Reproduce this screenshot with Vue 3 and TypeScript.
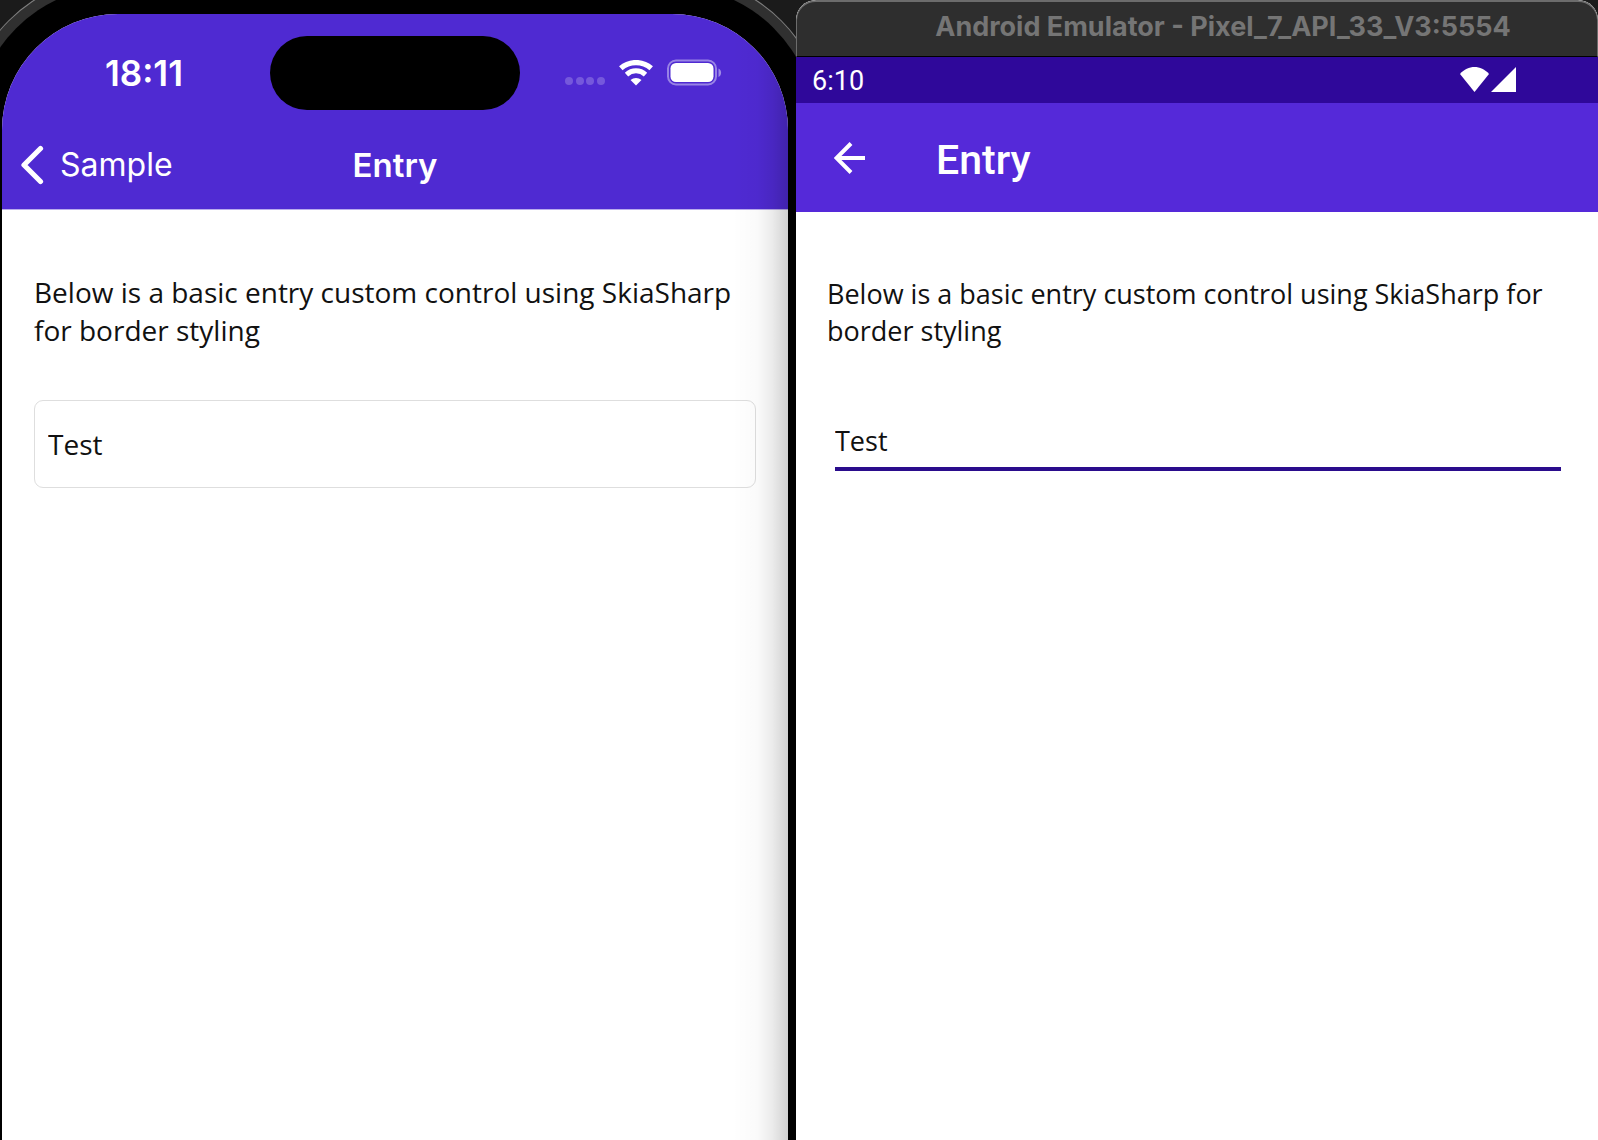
<script setup lang="ts">
import { ref } from 'vue'

const message = 'Below is a basic entry custom control using SkiaSharp for border styling'
const iosValue = ref('Test')
const androidValue = ref('Test')
</script>

<template>
  <main class="desktop">
    <section class="simulator" aria-label="iOS simulator">
      <div class="screen">
        <header class="ios-header">
          <div class="ios-status">
            <time class="ios-time">18:11</time>
            <div class="island"></div>
            <div class="ios-icons">
              <svg class="cell" width="40" height="8" viewBox="0 0 40 8" aria-hidden="true">
                <circle cx="4" cy="4" r="4" />
                <circle cx="15" cy="4" r="4" />
                <circle cx="25" cy="4" r="4" />
                <circle cx="36" cy="4" r="4" />
              </svg>
              <svg class="wifi" width="34" height="26" viewBox="0 0 34 26" aria-hidden="true">
                <path d="M1.800 8.300C10.400 0.600 23.600 0.600 32.200 8.300" fill="none" stroke="#fff" stroke-width="5.200" />
                <path d="M7.500 14.600C13 9.600 21 9.600 26.500 14.600" fill="none" stroke="#fff" stroke-width="5" />
                <path d="M17 25.500L11.500 20C14.600 17.200 19.400 17.200 22.500 20Z" fill="#fff" />
              </svg>
              <svg class="battery" width="56" height="28" viewBox="0 0 56 28" aria-hidden="true">
                <rect x="1" y="1.500" width="48" height="24" rx="8" fill="none" stroke="#fff" stroke-opacity=".42" stroke-width="2" />
                <rect x="3.500" y="4" width="43" height="19" rx="5.500" fill="#fff" />
                <path d="M51.500 9.500C55 11 55 16.500 51.500 18Z" fill="#fff" fill-opacity=".45" />
              </svg>
            </div>
          </div>
          <nav class="ios-nav">
            <button class="ios-back" type="button">
              <svg width="24" height="40" viewBox="0 0 24 40" aria-hidden="true">
                <path d="M20.500 3.500L4 20L20.500 36.500" fill="none" stroke="#fff" stroke-width="5.200" stroke-linecap="round" stroke-linejoin="round" />
              </svg>
              <span>Sample</span>
            </button>
            <h1 class="ios-title">Entry</h1>
          </nav>
        </header>
        <div class="ios-page">
          <label class="message ios-message" for="ios-entry">{{ message }}</label>
          <input id="ios-entry" v-model="iosValue" class="ios-entry" type="text" />
        </div>
      </div>
    </section>

    <section class="emulator" aria-label="Android emulator">
      <div class="titlebar">Android Emulator - Pixel_7_API_33_V3:5554</div>
      <div class="android-status">
        <time>6:10</time>
        <div class="android-icons">
          <svg width="29" height="25" viewBox="0 0 29 25" aria-hidden="true">
            <path d="M0 7C8-2.300 21-2.300 29 7L14.500 25Z" fill="#fff" />
          </svg>
          <svg width="25" height="25" viewBox="0 0 25 25" aria-hidden="true">
            <path d="M25 0V25H0Z" fill="#fff" />
          </svg>
        </div>
      </div>
      <header class="appbar">
        <button class="android-back" type="button" aria-label="Back">
          <svg width="32" height="32" viewBox="0 0 32 32" aria-hidden="true">
            <path d="M17 1.500L2.500 16L17 30.500M2.500 16H31" fill="none" stroke="#fff" stroke-width="4" />
          </svg>
        </button>
        <h1>Entry</h1>
      </header>
      <div class="android-page">
        <label class="message android-message" for="android-entry">{{ message }}</label>
        <input id="android-entry" v-model="androidValue" class="android-entry" type="text" />
      </div>
    </section>
  </main>
</template>

<style>
body {
  margin: 0;
  background: #1b1b1b;
}
</style>

<style scoped>
.desktop {
  display: grid;
  grid-template-columns: 796fr 802fr;
  min-height: 100vh;
  background: #1b1b1b;
  color: #111;
}

button,
input,
h1 {
  margin: 0;
  padding: 0;
  border: 0;
  background: none;
  color: inherit;
  box-sizing: border-box;
}

/* iOS simulator */
.simulator {
  display: flex;
  overflow: hidden;
  padding: 14px 8px 0 2px;
}

.screen {
  position: relative;
  flex: 1;
  display: flex;
  flex-direction: column;
  overflow: hidden;
  border-radius: 116px 116px 0 0;
  background: #fff;
  box-shadow: 0 0 0 28px #000, 0 0 0 38px #303030, 0 0 0 39px #808080;
}

/* shade falling on the right edge from the neighbouring window */
.screen::after {
  content: '';
  position: absolute;
  inset: 0 0 0 auto;
  width: 56px;
  background: linear-gradient(to right, rgba(0, 0, 0, 0), rgba(0, 0, 0, 0.02) 45%, rgba(0, 0, 0, 0.08) 72%, rgba(0, 0, 0, 0.18));
  pointer-events: none;
}

.ios-header {
  background: #4f2ad2;
  color: #fff;
  font-family: Inter, sans-serif;
  border-bottom: 1px solid #b9abec;
}

.ios-status {
  display: grid;
  grid-template-columns: 1fr 250px 1fr;
  align-items: center;
  padding-top: 22px;
}

.ios-time {
  padding-left: 103px;
  font-size: 35px;
  font-weight: 600;
  line-height: 40px;
}

.island {
  height: 74px;
  border-radius: 37px;
  background: #000;
}

.ios-icons {
  display: flex;
  align-items: center;
  gap: 14px;
  padding-left: 45px;
}

.cell {
  margin-top: 16px;
  fill: rgba(255, 255, 255, 0.22);
}

.ios-nav {
  display: grid;
  grid-template-columns: 1fr auto 1fr;
  align-items: center;
  height: 99px;
  padding: 10px 18px 0;
  box-sizing: border-box;
}

.ios-back {
  display: flex;
  align-items: center;
  gap: 16px;
  font: 400 32px/40px Inter, sans-serif;
}

.ios-title {
  font-size: 33px;
  font-weight: 600;
  line-height: 40px;
}

.message {
  font-family: 'Open Sans', sans-serif;
  color: #111;
}

.ios-page {
  display: flex;
  flex-direction: column;
  padding: 63px 32px;
}

.ios-message {
  font-size: 28px;
  line-height: 38px;
}

.ios-entry {
  height: 88px;
  margin-top: 51px;
  padding: 0 13px;
  border: 1px solid #dedede;
  border-radius: 9px;
  font: 400 28px/38px 'Open Sans', sans-serif;
}

/* Android emulator */
.emulator {
  display: flex;
  flex-direction: column;
  overflow: hidden;
  border-radius: 20px 20px 0 0;
  background: #fff;
}

.titlebar {
  height: 57px;
  box-sizing: border-box;
  padding-left: 52px;
  border: 1px solid #6c6c6c;
  border-top-width: 2px;
  border-bottom-color: #000;
  border-radius: 20px 20px 0 0;
  background: #2e2e2e;
  color: #757575;
  text-align: center;
  white-space: nowrap;
  font: 700 27px/50px Inter, sans-serif;
}

.android-status {
  display: flex;
  align-items: center;
  justify-content: space-between;
  height: 46px;
  padding: 0 82px 0 16px;
  background: #2f089a;
  color: #fff;
  font: 400 27px/46px Roboto, sans-serif;
}

.android-status time {
  padding-top: 2px;
}

.android-icons {
  display: flex;
  gap: 2px;
  padding-bottom: 2px;
}

.appbar {
  display: flex;
  align-items: center;
  gap: 70px;
  height: 109px;
  padding: 0 38px;
  background: #5529d9;
  color: #fff;
}

.android-back {
  display: flex;
}

.appbar h1 {
  padding-top: 4px;
  font: 500 41px/48px Roboto, sans-serif;
}

.android-page {
  display: flex;
  flex-direction: column;
  padding: 63px 31px;
}

.android-message {
  font-size: 27px;
  line-height: 37px;
}

.android-entry {
  height: 60px;
  margin: 62px 6px 0 8px;
  padding-top: 2px;
  border-bottom: 4px solid #2a0c8c;
  font: 400 27px/37px 'Open Sans', sans-serif;
}

.ios-entry:focus,
.android-entry:focus {
  outline: none;
}
</style>
